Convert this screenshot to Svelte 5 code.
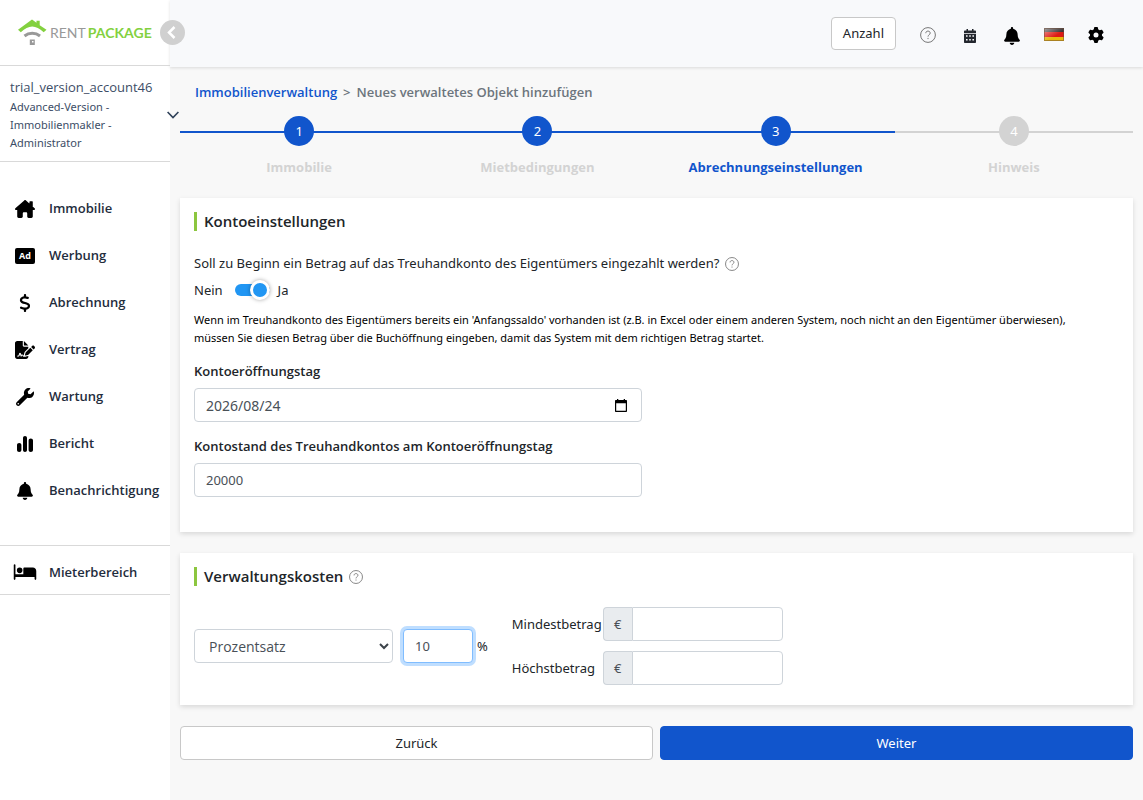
<script>
  const icons = {
    house: { w: 20, h: 18, box: '0 0 576 512', d: 'M432 32h64c9 0 16 7 16 16v150l-96-84V48c0-9 7-16 16-16zM575.8 255.5c0 18-15 32.1-32 32.1h-32l.7 160.2c0 2.7-.2 5.4-.5 8.1V472c0 22.1-17.9 40-40 40H392c-22.1 0-40-17.9-40-40V384c0-17.7-14.3-32-32-32H256c-17.7 0-32 14.3-32 32v88c0 22.1-17.9 40-40 40H104c-22.1 0-40-17.9-40-40V287.6H32c-18 0-32-14-32-32.1c0-9 3-17 10-24L266.4 8c7-7 15-8 22-8s15 2 21 7L564.8 231.5c8 7 12 15 11 24z' },
    dollar: { w: 12, h: 18, box: '0 0 320 512', d: 'M160 0c17.7 0 32 14.3 32 32V67.7c1.6 .2 3.1 .4 4.7 .7c.4 .1 .7 .1 1.1 .2l48 8.8c17.4 3.2 28.9 19.9 25.7 37.2s-19.9 28.9-37.2 25.7l-47.5-8.7c-31.3-4.6-58.9-1.5-78.3 6.2s-27.2 18.3-29 28.1c-2 10.7-.5 16.7 1.2 20.4c1.8 3.9 5.5 8.3 12.8 13.2c16.3 10.7 41.3 17.7 73.7 26.3l2.9 .8c28.6 7.6 63.6 16.8 89.6 33.8c14.2 9.3 27.6 21.9 35.9 39.5c8.5 17.9 10.3 37.9 6.4 59.2c-6.9 38-33.1 63.4-65.6 76.7c-13.7 5.6-28.6 9.2-44.4 11V480c0 17.7-14.3 32-32 32s-32-14.3-32-32V445.1c-.4-.1-.9-.1-1.3-.2l-.2 0c-24.4-3.8-64.5-14.3-91.5-26.3c-16.1-7.2-23.4-26.1-16.2-42.2s26.1-23.4 42.2-16.2c20.9 9.3 55.3 18.5 75.2 21.6c31.9 4.7 58.2 2 76-5.3c16.9-6.9 24.6-16.9 26.8-28.9c1.9-10.6 .4-16.7-1.3-20.4c-1.9-4-5.6-8.4-13-13.3c-16.4-10.7-41.5-17.7-74-26.3l-2.8-.7C119.4 279.3 84.4 270 58.4 253c-14.2-9.3-27.5-22-35.8-39.6c-8.4-17.9-10.1-37.9-6.1-59.2C23.7 116 52.3 91.2 84.8 78.3c13.3-5.3 27.9-8.9 43.2-11V32c0-17.7 14.3-32 32-32z' },
    sign: { w: 20, h: 18, box: '0 0 576 512', d: 'M64 0C28.7 0 0 28.7 0 64V448c0 35.3 28.7 64 64 64H320c35.3 0 64-28.7 64-64V428.7c-2.700 1.100-5.400 2-8.200 2.700l-60.100 15c-3 .7-6 1.200-9 1.400c-.9 .1-1.800 .2-2.700 .2H240c-6.100 0-11.600-3.400-14.300-8.800l-8.800-17.700c-1.700-3.400-5.100-5.500-8.800-5.500s-7.200 2.100-8.800 5.500l-8.800 17.700c-2.900 5.900-9.200 9.400-15.700 8.800s-12.100-5.100-13.900-11.300L144 381l-9.800 32.800c-6.100 20.300-24.800 34.200-46 34.200H80c-8.800 0-16-7.200-16-16s7.200-16 16-16h8.200c7.100 0 13.300-4.600 15.300-11.400l14.900-49.500c3.400-11.300 13.800-19.100 25.600-19.100s22.200 7.700 25.600 19.100l11.600 38.600c7.400-6.200 16.800-9.700 26.800-9.700c15.900 0 30.400 9 37.500 23.200l4.400 8.800h8.900c-3.100-8.800-3.700-18.400-1.400-27.800l15-60.100c2.800-11.300 8.600-21.500 16.800-29.700L384 203.600V160H256c-17.700 0-32-14.300-32-32V0H64zM256 0V128H384L256 0zM549.800 139.700c-15.600-15.600-40.900-15.600-56.600 0l-29.400 29.400 71 71 29.400-29.400c15.600-15.600 15.600-40.900 0-56.600l-14.400-14.400zM311.900 321c-4.100 4.100-7 9.200-8.400 14.900l-15 60.100c-1.400 5.500 .2 11.200 4.200 15.200s9.700 5.600 15.200 4.200l60.100-15c5.600-1.400 10.800-4.300 14.900-8.400L512.100 262.700l-71-71L311.900 321z' },
    wrench: { w: 18, h: 18, box: '0 0 512 512', d: 'M507.73 109.1c-2.24-9.03-13.54-12.09-20.12-5.51l-74.36 74.36-67.88-11.31-11.31-67.88 74.36-74.36c6.62-6.62 3.43-17.9-5.66-20.16-47.38-11.74-99.55.91-136.58 37.93-39.64 39.64-50.55 97.1-34.05 147.2L18.74 402.76c-24.99 24.99-24.99 65.51 0 90.5 24.99 24.99 65.51 24.99 90.5 0l213.21-213.21c50.12 16.71 107.47 5.68 147.37-34.22 37.07-37.07 49.7-89.32 37.91-136.73zM64 472c-13.25 0-24-10.75-24-24 0-13.26 10.75-24 24-24s24 10.74 24 24c0 13.25-10.75 24-24 24z' },
    bars: { w: 16, h: 16, box: '0 0 16 16', d: 'M8 0c1.200 0 2 .8 2 2v12c0 1.200-.8 2-2 2s-2-.8-2-2V2c0-1.200.8-2 2-2zM2.200 7c1.300 0 2.200.8 2.200 2v5c0 1.200-.9 2-2.200 2S0 15.200 0 14V9c0-1.200.9-2 2.200-2zM13.800 2.500c1.300 0 2.200.8 2.200 2V14c0 1.200-.9 2-2.200 2s-2.200-.8-2.200-2V4.500c0-1.200.9-2 2.200-2z' },
    bell: { w: 16, h: 18, box: '0 0 448 512', d: 'M224 512c35.32 0 63.97-28.65 63.97-64H160.03c0 35.35 28.65 64 63.97 64zm215.39-149.71c-19.32-20.76-55.47-51.99-55.47-154.29 0-77.7-54.48-139.9-127.94-155.16V32c0-17.67-14.32-32-31.98-32s-31.98 14.33-31.98 32v20.84C118.56 68.1 64.08 130.3 64.08 208c0 102.3-36.15 133.53-55.47 154.29-6 6.45-8.66 14.16-8.61 21.71.11 16.4 12.98 32 32.1 32h383.8c19.12 0 32-15.6 32.1-32 .05-7.55-2.61-15.27-8.61-21.71z' },
    bed: { w: 24, h: 18, box: '0 0 640 512', d: 'M24 32c13 0 24 11 24 24V320H272V160c0-17.7 14.300-32 32-32H544c53 0 96 43 96 96V456c0 13-11 24-24 24s-24-11-24-24V400H48v56c0 13-11 24-24 24s-24-11-24-24V56C0 43 11 32 24 32zm144 96a80 80 0 1 1 0 160 80 80 0 1 1 0-160z' },
    gear: { w: 16, h: 16, box: '0 0 512 512', d: 'M495.9 166.6c3.2 8.7 .5 18.4-6.4 24.6l-43.3 39.4c1.1 8.3 1.7 16.8 1.7 25.4s-.6 17.1-1.7 25.4l43.3 39.4c6.9 6.2 9.6 15.9 6.4 24.6c-4.4 11.9-9.7 23.3-15.8 34.3l-4.7 8.1c-6.6 11-14 21.4-22.1 31.2c-5.9 7.2-15.7 9.6-24.5 6.8l-55.7-17.7c-13.4 10.3-28.2 18.9-44 25.4l-12.5 57.1c-2 9.1-9 16.3-18.2 17.8c-13.8 2.3-28 3.5-42.5 3.5s-28.7-1.2-42.5-3.5c-9.2-1.5-16.2-8.7-18.2-17.8l-12.5-57.1c-15.8-6.5-30.6-15.1-44-25.4L83.1 425.9c-8.8 2.8-18.6 .3-24.5-6.8c-8.1-9.8-15.5-20.2-22.1-31.2l-4.7-8.1c-6.1-11-11.4-22.4-15.8-34.3c-3.2-8.7-.5-18.4 6.4-24.6l43.3-39.4C64.6 273.1 64 264.6 64 256s.6-17.1 1.7-25.4L22.4 191.2c-6.9-6.2-9.6-15.9-6.4-24.6c4.4-11.9 9.7-23.3 15.8-34.3l4.7-8.1c6.6-11 14-21.4 22.1-31.2c5.9-7.2 15.7-9.6 24.5-6.8l55.7 17.7c13.4-10.3 28.2-18.9 44-25.4l12.5-57.1c2-9.1 9-16.3 18.2-17.8C227.3 1.2 241.5 0 256 0s28.7 1.2 42.5 3.5c9.2 1.5 16.2 8.7 18.2 17.8l12.5 57.1c15.8 6.5 30.6 15.1 44 25.4l55.7-17.7c8.8-2.8 18.6-.3 24.5 6.8c8.1 9.8 15.5 20.2 22.1 31.2l4.7 8.1c6.1 11 11.4 22.4 15.8 34.3zM256 336a80 80 0 1 0 0-160 80 80 0 1 0 0 160z' }
  };

  const menu = [
    { label: 'Immobilie', icon: 'house' },
    { label: 'Werbung', icon: 'ad' },
    { label: 'Abrechnung', icon: 'dollar' },
    { label: 'Vertrag', icon: 'sign' },
    { label: 'Wartung', icon: 'wrench' },
    { label: 'Bericht', icon: 'bars' },
    { label: 'Benachrichtigung', icon: 'bell' }
  ];

  const steps = ['Immobilie', 'Mietbedingungen', 'Abrechnungseinstellungen', 'Hinweis'];
  const current = 2;

  let deposit = $state(true);
  let openingDate = $state('2026/08/24');
  let balance = $state('20000');
  let feeType = $state('percent');
  let fee = $state('10');
</script>

{#snippet glyph(name)}
  {#if name === 'ad'}
    <svg width="20" height="16" viewBox="0 0 20 16" aria-hidden="true">
      <rect width="20" height="16" rx="2" />
      <text class="ad" x="10" y="11" text-anchor="middle">Ad</text>
    </svg>
  {:else}
    <svg width={icons[name].w} height={icons[name].h} viewBox={icons[name].box} aria-hidden="true">
      <path fill="currentColor" d={icons[name].d} />
    </svg>
  {/if}
{/snippet}

{#snippet help(size)}
  <svg class="help" width={size} height={size} viewBox="0 0 16 16" fill="none" stroke="currentColor" aria-hidden="true">
    <circle cx="8" cy="8" r="7.4" />
    <path d="M5.800 6.200C5.800 4.800 6.700 4.100 8 4.100s2.200.8 2.200 2c0 1.700-2.200 1.700-2.200 3.500" />
    <path d="M8 10.900v1.200" />
  </svg>
{/snippet}

<div class="app">
  <aside class="side">
    <div class="brand">
      <a class="logo" href="#start">
        <svg width="30" height="27" viewBox="0 0 30 27" aria-hidden="true">
          <path fill="#83d13f" d="M1 10.800 15 .6l4.500 3.200V1.800h3.200v4.400L29.500 10.800l-2.800 2.400C22.500 9.500 19 7.400 15.200 7.400S8 9.500 3.800 13.200z" />
          <path d="M7.500 17c4.500-3.600 11-3.600 15.500 0" fill="none" stroke="#999" stroke-width="3" />
          <path fill="#999" d="M12.800 20.500h5v5.500h-5zM15 22v1.500h1.500V22z" fill-rule="evenodd" />
        </svg>
        <span class="rent">RENT</span><span class="package">PACKAGE</span>
      </a>
      <button class="collapse" aria-label="Menü einklappen">
        <svg width="25" height="25" viewBox="0 0 25 25" fill="none" stroke="#fff" stroke-width="2.500"><path d="m14.500 7-5.500 5.500 5.500 5.500" /></svg>
      </button>
    </div>

    <div class="user">
      <span class="name">trial_version_account46</span>
      <span class="role">Advanced-Version - Immobilienmakler - Administrator</span>
      <button class="expand" aria-label="Konto öffnen">
        <svg width="12" height="8" viewBox="0 0 12 8" fill="none" stroke="#2f4159" stroke-width="1.600"><path d="m.6 1 5.400 5.600L11.400 1" /></svg>
      </button>
    </div>

    <nav class="menu">
      {#each menu as item}
        <a href="#{item.icon}"><span class="ico">{@render glyph(item.icon)}</span>{item.label}</a>
      {/each}
    </nav>
    <a class="tenant" href="#mieter"><span class="ico">{@render glyph('bed')}</span>Mieterbereich</a>
  </aside>

  <div class="page">
    <header class="top">
      <button class="count">Anzahl</button>
      <button class="tool" aria-label="Hilfe">{@render help(16)}</button>
      <button class="tool low" aria-label="Kalender">
        <svg width="12" height="14" viewBox="0 0 12 14" aria-hidden="true">
          <path fill="#23272e" fill-rule="evenodd" d="M2.500 0h1.500v1.500h4V0h1.500v1.500H11c.6 0 1 .4 1 1V4H0V2.500c0-.6.4-1 1-1h1.500zM0 4.800h12V13c0 .6-.4 1-1 1H1c-.6 0-1-.4-1-1zM2 6.200v1.600h1.600V6.200zm3.200 0v1.600h1.600V6.200zm3.200 0v1.600H10V6.200zM2 10v1.600h1.600V10zm3.200 0v1.600h1.600V10zm3.200 0v1.600H10V10z" />
        </svg>
      </button>
      <button class="tool low" aria-label="Benachrichtigungen">{@render glyph('bell')}</button>
      <button class="tool" aria-label="Sprache">
        <svg width="20" height="13" viewBox="0 0 20 13" aria-hidden="true">
          <defs>
            <linearGradient id="shine" x1="0" y1="0" x2="1" y2="1">
              <stop offset="0" stop-color="#fff" stop-opacity=".55" />
              <stop offset=".6" stop-color="#fff" stop-opacity="0" />
            </linearGradient>
          </defs>
          <rect width="20" height="5" fill="#3a3334" />
          <rect y="4" width="20" height="5" fill="#dc1a14" />
          <rect y="9" width="20" height="4" fill="#e8b90c" />
          <rect width="20" height="13" fill="url(#shine)" />
          <rect x=".5" y=".5" width="19" height="12" fill="none" stroke="#6b4a35" stroke-opacity=".5" />
        </svg>
      </button>
      <button class="tool" aria-label="Einstellungen">{@render glyph('gear')}</button>
    </header>

    <main>
      <div class="crumbs"><a href="#verwaltung">Immobilienverwaltung</a><span>&gt;</span><span>Neues verwaltetes Objekt hinzufügen</span></div>

      <ol class="steps">
        {#each steps as step, i}
          <li class:done={i <= current} class:current={i === current}>
            <span class="num">{i + 1}</span>
            <span class="cap">{step}</span>
          </li>
        {/each}
      </ol>

      <section class="card account">
        <h2>Kontoeinstellungen</h2>
        <p class="question">Soll zu Beginn ein Betrag auf das Treuhandkonto des Eigentümers eingezahlt werden? {@render help(14)}</p>
        <label class="toggle">
          <span>Nein</span>
          <input type="checkbox" role="switch" bind:checked={deposit} />
          <span>Ja</span>
        </label>
        <p class="note">Wenn im Treuhandkonto des Eigentümers bereits ein 'Anfangssaldo' vorhanden ist (z.B. in Excel oder einem anderen System, noch nicht an den Eigentümer überwiesen), müssen Sie diesen Betrag über die Buchöffnung eingeben, damit das System mit dem richtigen Betrag startet.</p>
        <div class="field">
          <label for="opening">Kontoeröffnungstag</label>
          <div class="date">
            <input id="opening" type="text" bind:value={openingDate} />
            <button aria-label="Datum wählen">
              <svg width="12" height="13" viewBox="0 0 12 13" aria-hidden="true"><path fill="#000" fill-rule="evenodd" d="M2 0h1.300v1h5.400V0H10v1h1c.6 0 1 .4 1 1v10c0 .6-.4 1-1 1H1c-.6 0-1-.4-1-1V2c0-.6.4-1 1-1h1zM1.200 4.200v7.600h9.600V4.200z" /></svg>
            </button>
          </div>
        </div>
        <div class="field">
          <label for="balance">Kontostand des Treuhandkontos am Kontoeröffnungstag</label>
          <input id="balance" type="text" inputmode="numeric" bind:value={balance} />
        </div>
      </section>

      <section class="card">
        <h2>Verwaltungskosten {@render help(14)}</h2>
        <div class="fees">
          <div class="rate">
            <div class="pick">
              <select aria-label="Art der Gebühr" bind:value={feeType}><option value="percent">Prozentsatz</option></select>
              <svg width="10" height="7" viewBox="0 0 10 7" fill="none" stroke="#3c434a" stroke-width="2" aria-hidden="true"><path d="m1 1 4 4 4-4" /></svg>
            </div>
            <input id="fee" class="focus" type="text" inputmode="numeric" bind:value={fee} />
            <label for="fee">%</label>
          </div>
          <div class="limits">
            <label for="min">Mindestbetrag</label>
            <div class="money"><span>€</span><input id="min" type="text" inputmode="numeric" /></div>
            <label for="max">Höchstbetrag</label>
            <div class="money"><span>€</span><input id="max" type="text" inputmode="numeric" /></div>
          </div>
        </div>
      </section>

      <div class="actions">
        <button class="back">Zurück</button>
        <button class="next">Weiter</button>
      </div>
    </main>
  </div>
</div>

<style>
  :global(body) { background: #f8f8f8; }
  .app, .app * { box-sizing: border-box; }
  .app {
    display: flex;
    min-height: 100vh;
    font: 13px/21px "Segoe UI", "Noto Sans", sans-serif;
    color: #212529;
  }
  .menu, .tenant, .crumbs, .cap, h2, .field label { font-family: "Segoe UI", "Open Sans", sans-serif; }
  a { text-decoration: none; color: inherit; }
  button, input, select { font: inherit; color: inherit; }
  button { cursor: pointer; border: 0; padding: 0; background: none; }
  svg { display: block; }

  .side { flex: 0 0 170px; background: #fff; }
  .brand { position: relative; display: flex; height: 66px; padding-left: 17px; align-items: center; border-bottom: 1px solid #d9d9d9; }
  .logo { display: flex; align-items: center; font: 14px/20px Lato, sans-serif; }
  .logo svg { margin-right: 3px; }
  .rent { margin-right: 2px; color: #999; }
  .package { color: #83d13f; font-weight: 700; }
  .collapse { position: absolute; z-index: 2; right: -15px; top: 20px; width: 25px; height: 25px; border-radius: 50%; background: #d0d0d0; }
  .user { position: relative; display: flex; flex-direction: column; padding: 11px 10px 9px; border-bottom: 1px solid #d9d9d9; color: #3c4d66; }
  .name { font-family: "Segoe UI", "Open Sans", sans-serif; }
  .role { width: 120px; font-size: 11px; line-height: 18px; }
  .expand { position: absolute; z-index: 2; right: -9px; top: 45px; }
  .menu { display: flex; flex-direction: column; padding: 23px 0 31px; }
  .menu a, .tenant { display: flex; align-items: center; gap: 12px; height: 47px; padding-left: 13px; font-weight: 600; color: #1f2d3d; }
  .ico { display: flex; flex: 0 0 24px; justify-content: center; color: #000; }
  .ad { font: 700 9px/9px "Open Sans", sans-serif; fill: #fff; }
  .tenant { height: 50px; padding-top: 4px; border: solid #d9d9d9; border-width: 1px 0; }

  .page { flex: 1; min-width: 0; }
  .top { display: flex; align-items: center; justify-content: flex-end; gap: 16px; height: 67px; padding-right: 34px; background: #f8f9fb; box-shadow: 0 1px 3px rgb(0 0 0 / 12%); }
  .count { height: 33px; margin-right: 3px; padding: 0 11px; border: 1px solid #c8c8c8; border-radius: 4px; background: #fff; }
  .tool { display: flex; width: 26px; height: 28px; padding-top: 2px; align-items: center; justify-content: center; color: #000; }
  .tool.low { padding-top: 5px; }
  .help { color: #777; }
  main { padding: 15px 10px 40px; }

  .crumbs { display: flex; gap: 6px; padding-left: 15px; font-weight: 600; color: #6c757d; }
  .crumbs a { color: #1155cc; }
  .steps { display: flex; margin: 13px 0 20px; padding: 0; list-style: none; }
  .steps li { display: flex; flex: 1; flex-direction: column; align-items: center; gap: 11px; color: #d3d3d3; background: linear-gradient(#d3d3d3, #d3d3d3) 0 15px / 100% 2px no-repeat; }
  .steps .done { background-image: linear-gradient(#1155cc, #1155cc); }
  .num { width: 30px; height: 30px; border-radius: 50%; background: #d3d3d3; color: #fff; line-height: 30px; text-align: center; }
  .done .num { background: #1155cc; }
  .cap { font-weight: 700; }
  .current .cap { color: #1155cc; }

  .card { margin-bottom: 21px; padding: 14px 14px 20px; background: #fff; box-shadow: 0 2px 5px rgb(0 0 0 / 13%); }
  .account { padding-bottom: 35px; }
  h2 { display: flex; align-items: center; gap: 6px; height: 19px; margin: 0; padding-left: 7px; border-left: 3px solid #8cc63f; font-size: 15px; line-height: 21px; font-weight: 600; }
  p { margin: 0; }
  .question { display: flex; align-items: center; gap: 6px; margin-top: 22px; }
  .toggle { display: flex; align-items: center; gap: 8px; width: max-content; height: 21px; margin-top: 6px; }
  .toggle input { appearance: none; display: flex; flex: none; align-items: center; width: 35px; height: 12px; margin: 0 0 2px 4px; border-radius: 6px; background: #9aa0a6; }
  .toggle input::after { content: ""; box-sizing: border-box; flex: none; width: 20px; height: 20px; border: 3px solid #fff; border-radius: 50%; background: #9aa0a6; box-shadow: 0 0 4px rgb(0 0 0 / 35%); }
  .toggle input:checked { justify-content: flex-end; background: #2196f3; }
  .toggle input:checked::after { background: #2196f3; }
  .note { margin-top: 10px; padding-right: 32px; font-size: 11px; line-height: 18px; color: #000; }
  .field { display: flex; flex-direction: column; gap: 6px; width: 448px; max-width: 100%; margin-top: 14px; }
  .field label { font-weight: 600; }
  input[type="text"], select { height: 34px; min-width: 0; padding: 0 11px; border: 1px solid #ced4da; border-radius: 4px; background: #fff; color: #495057; outline: 0; }
  .date { display: grid; }
  .date > * { grid-area: 1 / 1; }
  .date #opening { font-size: 14px; }
  .date button { justify-self: end; align-self: center; margin-right: 15px; }

  .fees { display: flex; align-items: center; gap: 24px; margin-top: 21px; }
  .rate { display: flex; align-items: center; }
  .pick { display: grid; width: 199px; align-items: center; }
  .pick > * { grid-area: 1 / 1; }
  .pick svg { justify-self: end; margin-right: 4px; pointer-events: none; }
  select { appearance: none; width: 100%; padding: 0 14px; font-family: "Segoe UI", "Open Sans", sans-serif; font-size: 14px; }
  .rate .focus { width: 70px; margin: 0 4px 0 10px; border-color: #80bdff; box-shadow: 0 0 0 3px #bfdeff; }
  .limits { display: grid; grid-template-columns: 91px 180px; row-gap: 10px; align-items: center; }
  .money { display: flex; }
  .money span { flex: 0 0 29px; border: 1px solid #ced4da; border-right: 0; border-radius: 4px 0 0 4px; background: #e9ecef; color: #495057; line-height: 32px; text-align: center; }
  .money input { flex: 1; border-radius: 0 4px 4px 0; }

  .actions { display: grid; grid-template-columns: 1fr 1fr; gap: 7px; }
  .actions button { height: 34px; border: 1px solid #c8c8c8; border-radius: 4px; background: #fff; }
  .actions .next { border-color: #1155cc; background: #1155cc; color: #fff; }
</style>
